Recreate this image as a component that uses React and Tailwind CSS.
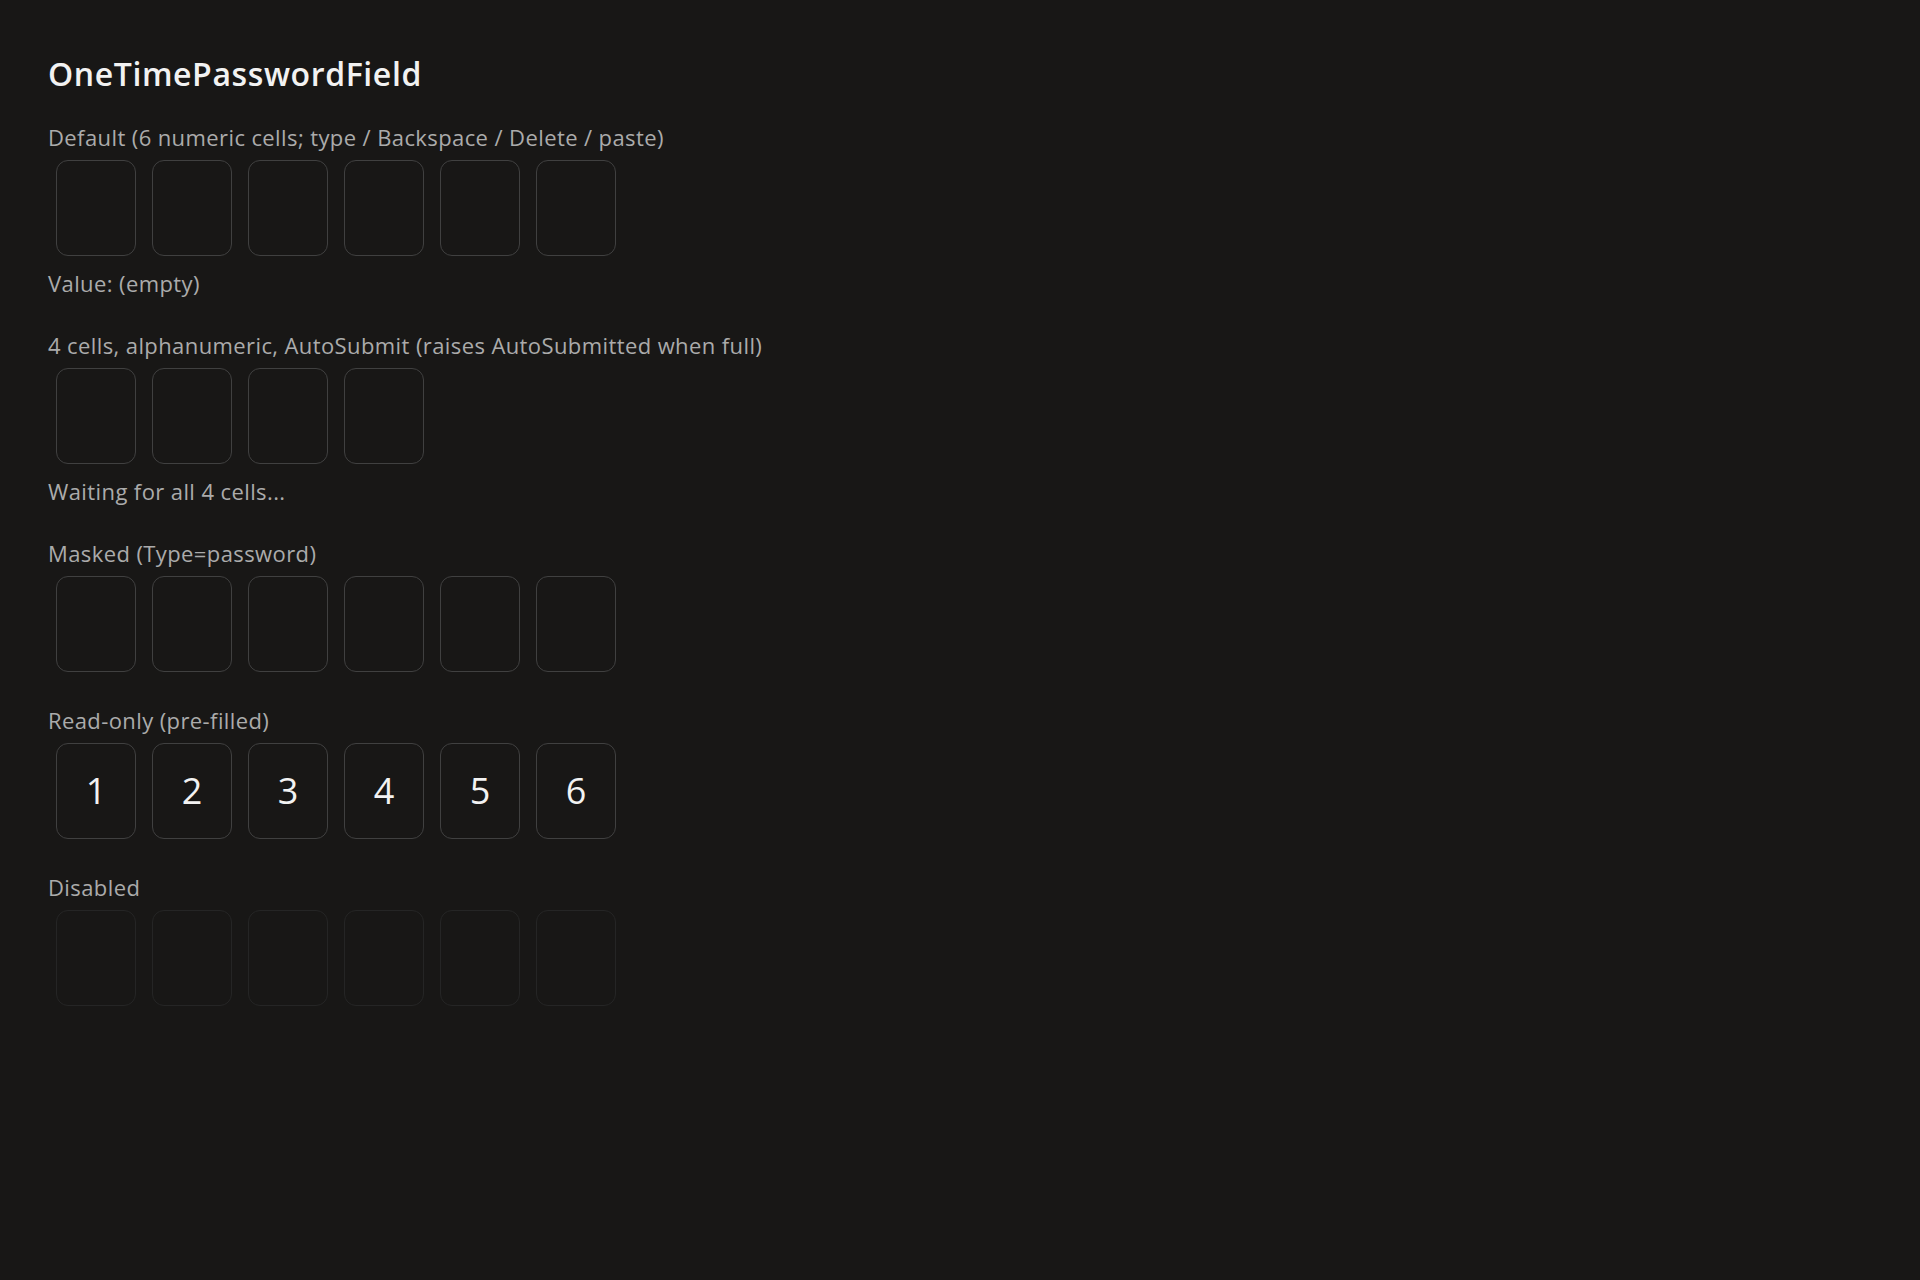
import React from 'react';

const Cells = ({ count = 6, values, disabled = false }) => {
  const cells = Array.from({ length: count }, (_, i) => (values ? values[i] : ''));
  return (
    <div className="mt-[9px] ml-[8px] flex gap-[16px]">
      {cells.map((v, i) => (
        <div
          key={i}
          className={`flex h-[96px] w-[80px] items-center justify-center rounded-[12px] border ${
            disabled ? 'border-[#252525]' : 'border-[#404040]'
          } text-[36px] leading-none text-[#f2f2f2]`}
        >
          {v}
        </div>
      ))}
    </div>
  );
};

const Label = ({ children, className = '' }) => (
  <div className={`text-[22px] leading-[28px] tracking-[0.4px] text-[#ababab] ${className}`}>{children}</div>
);

const App = () => {
  const sections = [
    { label: 'Default (6 numeric cells; type / Backspace / Delete / paste)', count: 6, status: 'Value: (empty)' },
    { label: '4 cells, alphanumeric, AutoSubmit (raises AutoSubmitted when full)', count: 4, status: 'Waiting for all 4 cells...' },
    { label: 'Masked (Type=password)', count: 6 },
    { label: 'Read-only (pre-filled)', count: 6, values: ['1', '2', '3', '4', '5', '6'] },
    { label: 'Disabled', count: 6, disabled: true },
  ];

  return (
    <div className="min-h-screen bg-[#181716] px-[48px] pt-[54px] font-['Open_Sans',sans-serif]">
      <h1 className="text-[32px] font-semibold leading-[40px] tracking-[0.6px] text-[#f2f2f2]">OneTimePasswordField</h1>
      <div className="mt-[29px] flex flex-col gap-[34px]">
        {sections.map((s) => (
          <div key={s.label}>
            <Label>{s.label}</Label>
            <Cells count={s.count} values={s.values} disabled={s.disabled} />
            {s.status && <Label className="mt-[13px]">{s.status}</Label>}
          </div>
        ))}
      </div>
    </div>
  );
};

export default App;
